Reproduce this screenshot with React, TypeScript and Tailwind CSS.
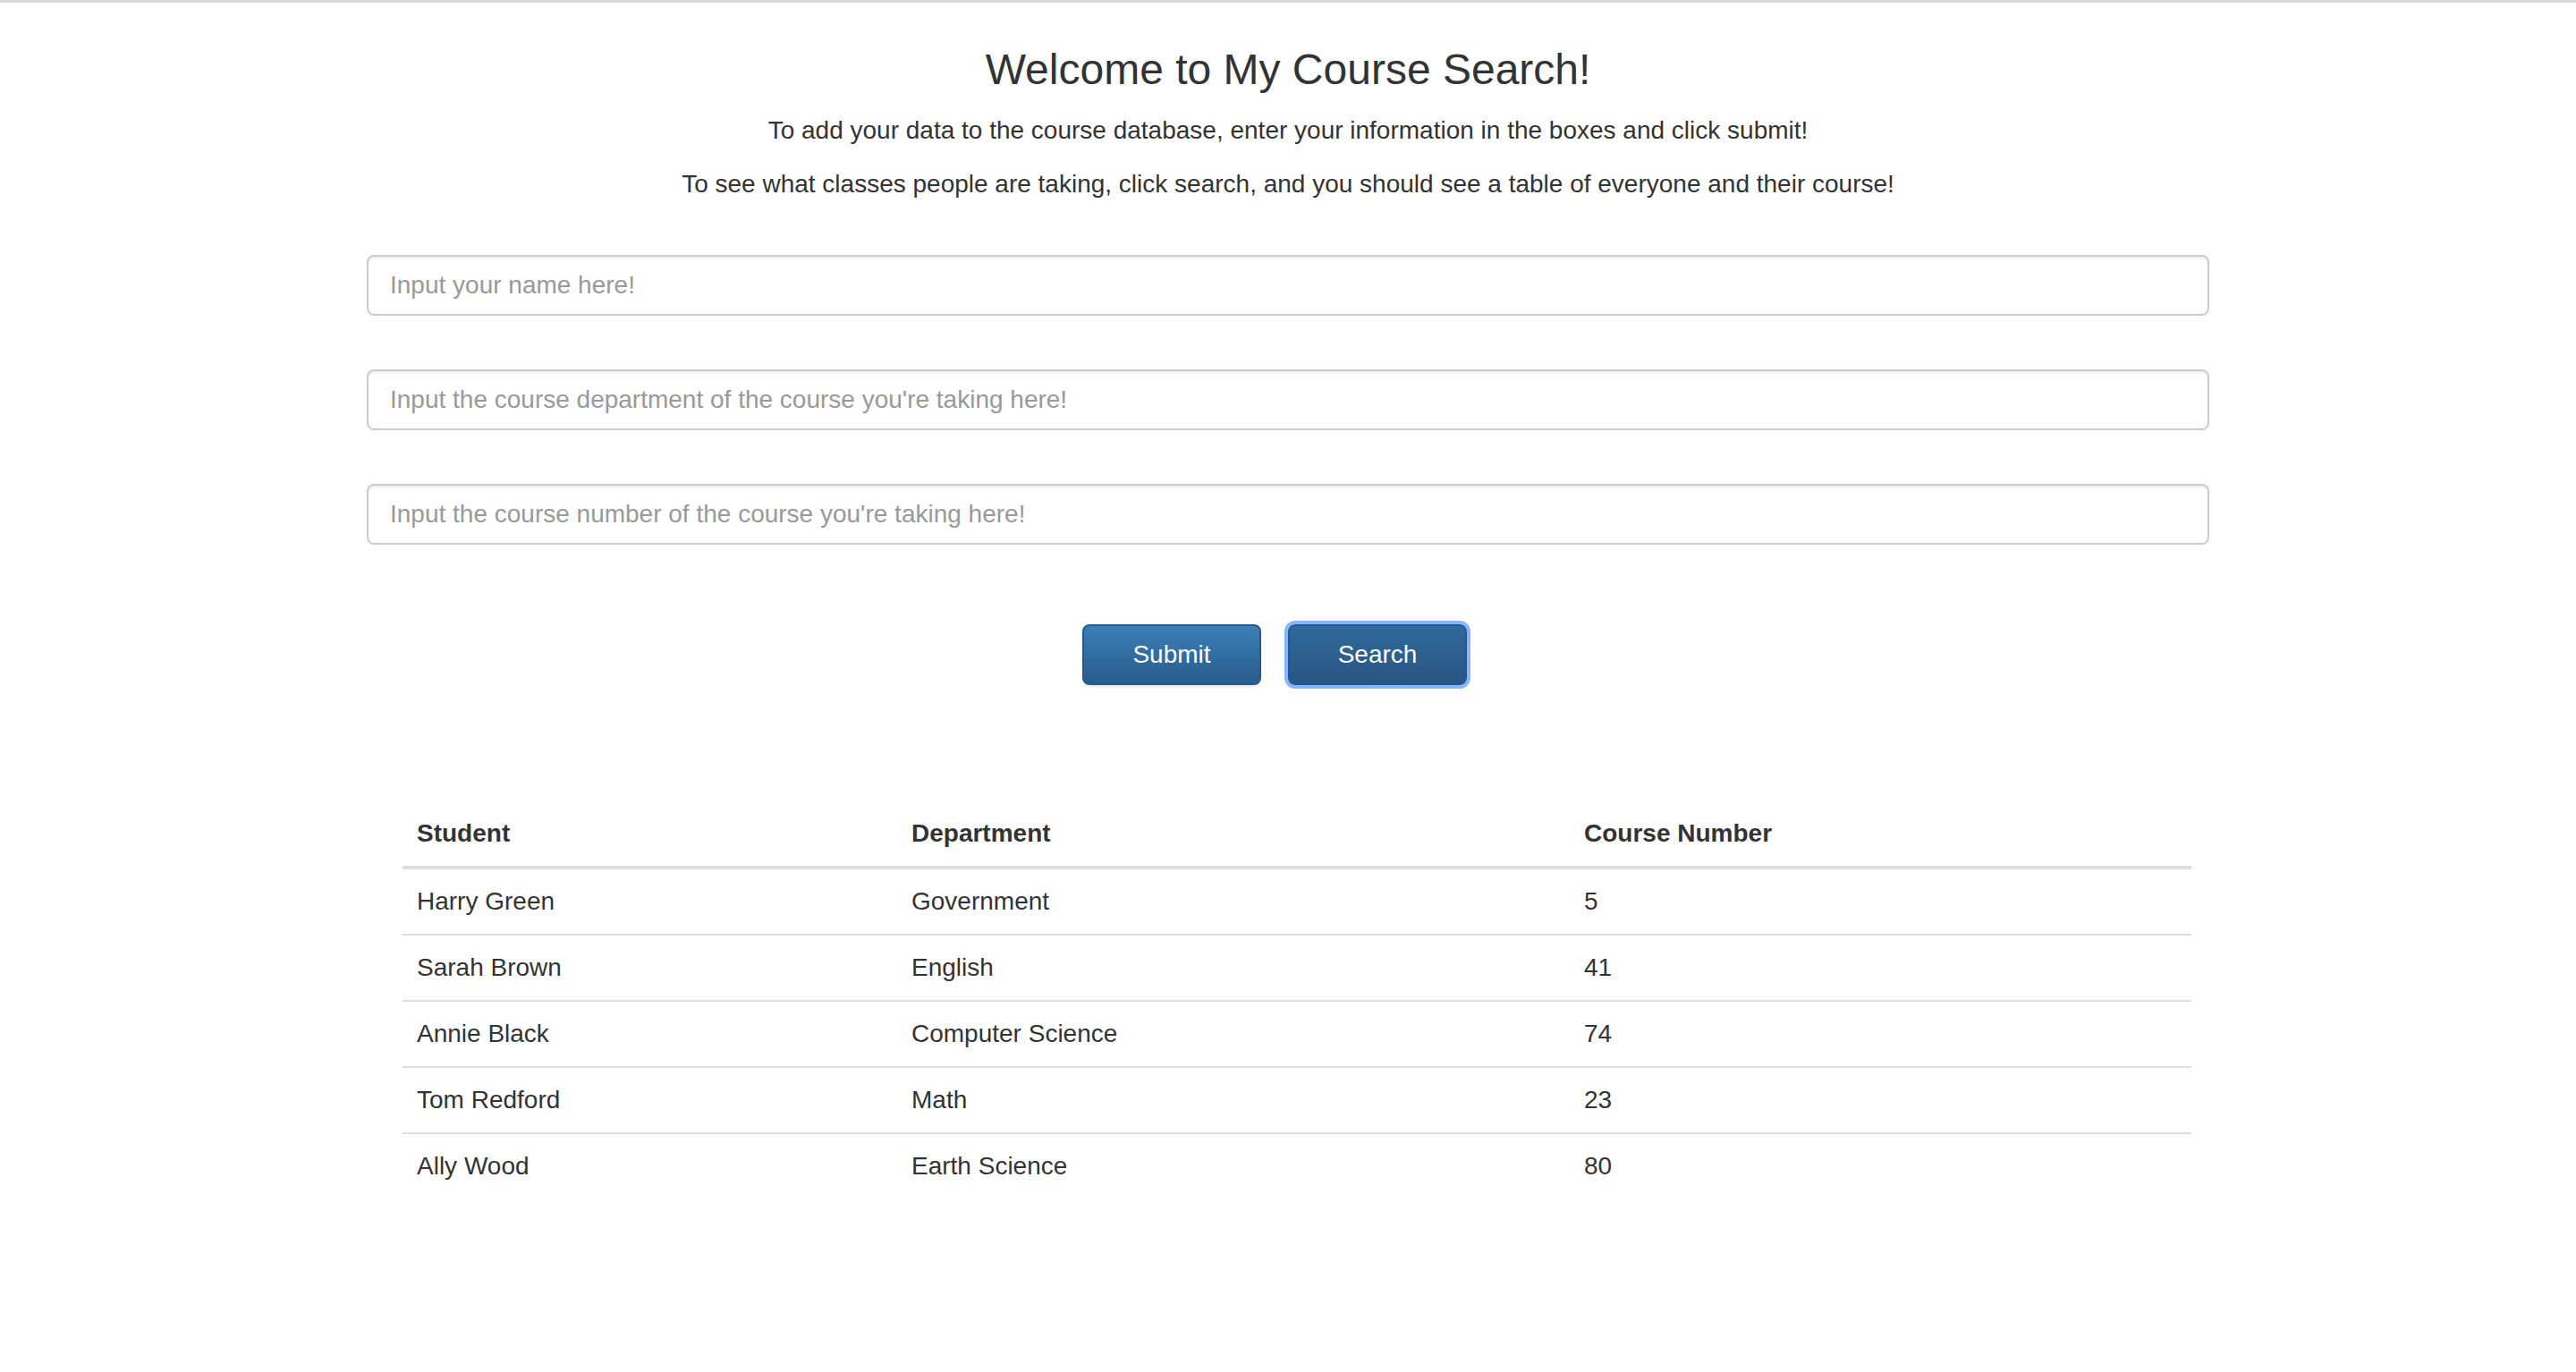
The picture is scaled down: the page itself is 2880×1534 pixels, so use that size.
import React from 'react';

const rows = [
  { student: 'Harry Green', dept: 'Government', num: '5' },
  { student: 'Sarah Brown', dept: 'English', num: '41' },
  { student: 'Annie Black', dept: 'Computer Science', num: '74' },
  { student: 'Tom Redford', dept: 'Math', num: '23' },
  { student: 'Ally Wood', dept: 'Earth Science', num: '80' },
];

const placeholders = [
  'Input your name here!',
  "Input the course department of the course you're taking here!",
  "Input the course number of the course you're taking here!",
];

export default function App() {
  return (
    <div className="min-h-screen bg-white border-t-[3px] border-[#d9d9dd] font-['Liberation_Sans',Arial,sans-serif] text-[#333]">
      <div className="mx-auto w-[2060px]">
        <h2 className="mt-[48px] mb-[22px] text-center text-[48px] leading-[53px] font-normal">
          Welcome to My Course Search!
        </h2>
        <p className="mb-[20px] text-center text-[28px] leading-[40px]">
          To add your data to the course database, enter your information in the boxes and click submit!
        </p>
        <p className="text-center text-[28px] leading-[40px]">
          To see what classes people are taking, click search, and you should see a table of everyone and their course!
        </p>

        {/* form fields */}
        <div className="mt-[59px] flex flex-col gap-[60px]">
          {placeholders.map((ph) => (
            <input
              key={ph}
              type="text"
              placeholder={ph}
              className="h-[68px] w-full rounded-[8px] border-2 border-[#ccc] bg-white px-[24px] text-[28px] text-[#555] outline-none shadow-[inset_0_2px_2px_rgba(0,0,0,0.075)] placeholder:text-[#999]"
            />
          ))}
        </div>

        <div className="mt-[89px] flex justify-center gap-[30px] pr-[30px]">
          <button className="h-[68px] w-[200px] rounded-[8px] border-2 border-[#28598a] bg-linear-to-b from-[#3b7fb9] to-[#295c8a] text-[28px] text-white shadow-[0_2px_3px_rgba(0,0,0,0.1)]">
            Submit
          </button>
          <button className="h-[68px] w-[200px] rounded-[8px] border-2 border-[#1f56a3] bg-linear-to-b from-[#30699a] to-[#2a5682] text-[28px] text-white shadow-[0_0_0_4px_#8ab6f4]">
            Search
          </button>
        </div>

        {/* results table */}
        <table className="mt-[130px] ml-[40px] w-[2000px] border-collapse text-[28px] leading-[40px]">
          <thead>
            <tr>
              <th className="w-[553px] border-b-4 border-[#ddd] p-[16px] text-left font-bold">Student</th>
              <th className="w-[752px] border-b-4 border-[#ddd] p-[16px] text-left font-bold">Department</th>
              <th className="border-b-4 border-[#ddd] p-[16px] text-left font-bold">Course Number</th>
            </tr>
          </thead>
          <tbody>
            {rows.map((r, i) => (
              <tr key={r.student} className={i === 0 ? '' : 'border-t-2 border-[#ddd]'}>
                <td className="p-[16px]">{r.student}</td>
                <td className="p-[16px]">{r.dept}</td>
                <td className="p-[16px]">{r.num}</td>
              </tr>
            ))}
          </tbody>
        </table>
      </div>
    </div>
  );
}
